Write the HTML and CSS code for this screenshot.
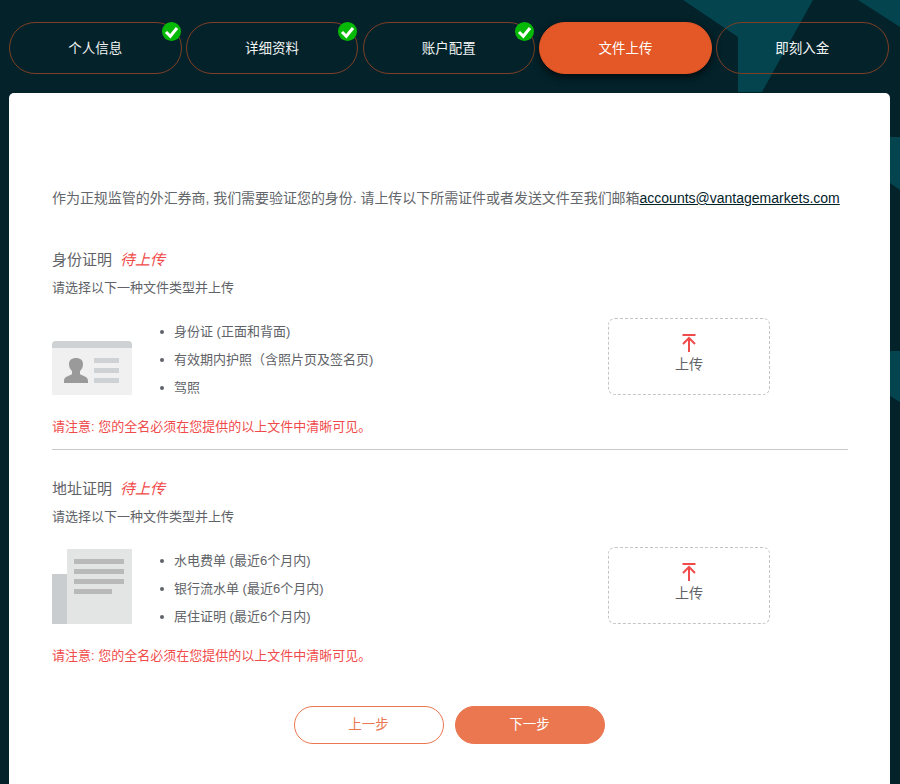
FILE: index.html
```html
<!DOCTYPE html>
<html lang="zh-CN">
<head>
<meta charset="utf-8">
<title>文件上传</title>
<link rel="stylesheet" href="styles.css">
</head>
<body>
<svg class="bg-shapes" width="900" height="784" viewBox="0 0 900 784" aria-hidden="true">
  <polygon class="shape" points="683,0 813,0 762,92 738,92 738,37"/>
  <polygon class="shape" points="858,0 900,0 900,27"/>
  <polygon class="shape" points="890,137 900,137 900,190 890,183"/>
  <polygon class="shape" points="890,351 900,351 900,402 890,396"/>
</svg>
<nav class="steps">
  <div class="step"><span class="step-label">个人信息</span><svg class="check" width="19" height="19" viewBox="0 0 19 19"><circle cx="9.5" cy="9.5" r="9.500" fill="#06b906"/><path d="M4 10l4.300 4.300L15 6" fill="none" stroke="#fff" stroke-width="3"/></svg></div>
  <div class="step"><span class="step-label">详细资料</span><svg class="check" width="19" height="19" viewBox="0 0 19 19"><circle cx="9.5" cy="9.5" r="9.500" fill="#06b906"/><path d="M4 10l4.300 4.300L15 6" fill="none" stroke="#fff" stroke-width="3"/></svg></div>
  <div class="step"><span class="step-label">账户配置</span><svg class="check" width="19" height="19" viewBox="0 0 19 19"><circle cx="9.5" cy="9.5" r="9.500" fill="#06b906"/><path d="M4 10l4.300 4.300L15 6" fill="none" stroke="#fff" stroke-width="3"/></svg></div>
  <div class="step active"><span class="step-label">文件上传</span></div>
  <div class="step"><span class="step-label">即刻入金</span></div>
</nav>
<main class="card">
  <p class="intro">作为正规监管的外汇券商, 我们需要验证您的身份. 请上传以下所需证件或者发送文件至我们邮箱<a href="#">accounts@vantagemarkets.com</a></p>

  <section class="doc first">
    <h2 class="doc-title">身份证明<em>待上传</em></h2>
    <p class="doc-sub">请选择以下一种文件类型并上传</p>
    <div class="doc-row">
      <svg class="doc-img" width="80" height="54" viewBox="0 0 80 54">
        <path d="M0 4a4 4 0 0 1 4-4h72a4 4 0 0 1 4 4v50H0z" fill="#f0f0f0"/>
        <path d="M0 4a4 4 0 0 1 4-4h72a4 4 0 0 1 4 4v3H0z" fill="#ced2d4"/>
        <path d="M12 42v-2c0-5 6-5 8-7v-3c-2-2-3-4-3-7 0-4 3-6 7-6s7 2 7 6c0 3-1 5-3 7v3c2 2 8 2 8 7v2z" fill="#9a9a9a"/>
        <rect x="42" y="17" width="25" height="5" fill="#ced2d4"/>
        <rect x="42" y="27" width="25" height="5" fill="#ced2d4"/>
        <rect x="42" y="37" width="25" height="5" fill="#ced2d4"/>
      </svg>
      <ul class="doc-list">
        <li>身份证 (正面和背面)</li>
        <li>有效期内护照（含照片页及签名页)</li>
        <li>驾照</li>
      </ul>
      <div class="upload">
        <svg width="14" height="18" viewBox="0 0 14 18"><path d="M0.500 1h13M7 18V4M1 10L7 4l6 6" fill="none" stroke="#f04b4b" stroke-width="2"/></svg>
        <span class="upload-label">上传</span>
      </div>
    </div>
    <p class="note">请注意: 您的全名必须在您提供的以上文件中清晰可见。</p>
  </section>

  <section class="doc second">
    <h2 class="doc-title">地址证明<em>待上传</em></h2>
    <p class="doc-sub">请选择以下一种文件类型并上传</p>
    <div class="doc-row">
      <svg class="doc-img" width="80" height="75" viewBox="0 0 80 75">
        <rect x="0" y="25" width="16" height="50" fill="#c9cdd0"/>
        <rect x="15" y="0" width="65" height="75" fill="#e3e5e5"/>
        <rect x="22" y="10" width="50" height="5" fill="#b9b9b9"/>
        <rect x="22" y="20" width="50" height="5" fill="#b9b9b9"/>
        <rect x="22" y="30" width="50" height="5" fill="#b9b9b9"/>
        <rect x="22" y="40" width="38" height="5" fill="#b9b9b9"/>
      </svg>
      <ul class="doc-list">
        <li>水电费单 (最近6个月内)</li>
        <li>银行流水单 (最近6个月内)</li>
        <li>居住证明 (最近6个月内)</li>
      </ul>
      <div class="upload">
        <svg width="14" height="18" viewBox="0 0 14 18"><path d="M0.500 1h13M7 18V4M1 10L7 4l6 6" fill="none" stroke="#f04b4b" stroke-width="2"/></svg>
        <span class="upload-label">上传</span>
      </div>
    </div>
    <p class="note">请注意: 您的全名必须在您提供的以上文件中清晰可见。</p>
  </section>

  <div class="actions">
    <button class="btn btn-prev" type="button"><span class="btn-label">上一步</span></button>
    <button class="btn btn-next" type="button"><span class="btn-label">下一步</span></button>
  </div>
</main>
</body>
</html>
```
FILE: styles.css
```css
* { box-sizing: border-box; }
html, body { margin: 0; height: 784px; overflow: hidden; }
body {
  position: relative;
  background: #03222a;
  font-family: "Liberation Sans", "Noto Sans CJK SC", sans-serif;
  font-size: 14px;
  color: #5f6368;
  padding: 22px 10px 0 9px;
}
.bg-shapes { position: absolute; left: 0; top: 0; }
.shape { fill: #03444f; }
.steps {
  position: relative;
  display: flex;
  justify-content: space-between;
  height: 52px;
  padding-right: 1.5px;
}
.step {
  position: relative;
  width: 172.5px;
  height: 52px;
  display: flex;
  align-items: center;
  justify-content: center;
  padding-bottom: 3px;
  border: 1px solid #7e3f26;
  border-radius: 26px;
  color: #f2f4f4;
  font-size: 13.5px;
}
.step.active {
  background: #e45726;
  border-color: #e45726;
  color: #fff;
  box-shadow: 0 3px 8px rgba(0,0,0,.7);
}
.check { position: absolute; right: 0; top: -1px; }
.card {
  position: relative;
  margin-top: 19px;
  height: 691px;
  background: #fff;
  border-radius: 5px 5px 0 0;
  padding: 96px 42px 0 43px;
}
.intro { margin: 0; font-size: 14px; line-height: 18px; color: #63666a; white-space: nowrap; letter-spacing: -0.045px; }
.intro a { color: #03222a; letter-spacing: 0; }
.doc-title { margin: 0; font-size: 15px; line-height: 20px; font-weight: 400; color: #5f6368; }
.doc-title em { margin-left: 8px; color: #f04b4b; }
.doc-sub { margin: 9px 0 0; font-size: 13px; line-height: 18px; }
.first { margin-top: 43px; padding-bottom: 13px; border-bottom: 1px solid #c9c9c9; }
.second { margin-top: 29px; }
.doc-row { display: flex; margin-top: 21px; height: 84px; align-items: flex-start; }
.doc-img { flex: none; align-self: flex-end; margin-bottom: 7px; }
.doc-list { flex: none; width: 476px; margin: 0; padding: 0 0 0 41px; list-style: none; font-size: 13px; }
.doc-list li { position: relative; height: 28px; line-height: 28px; padding-left: 1px; }
.doc-list li::before { content: ""; position: absolute; left: -13px; top: 12px; width: 4px; height: 4px; border-radius: 50%; background: #5f6368; }
.upload {
  flex: none;
  width: 162px;
  height: 77px;
  display: flex;
  flex-direction: column;
  align-items: center;
  padding-top: 15px;
  gap: 2px;
  border: 1px dashed #c4c4c4;
  border-radius: 7px;
  color: #5f6368;
}
.upload-label { line-height: 20px; }
.note { margin: 16px 0 0; font-size: 13px; line-height: 18px; color: #f04b4b; }
.actions { display: flex; justify-content: center; gap: 11px; margin-top: 41px; padding-right: 2px; }
.btn { width: 150px; height: 38px; border-radius: 19px; font: inherit; font-size: 13.5px; padding: 0 0 4px; }
.btn-prev { background: #fff; border: 1px solid #ea7750; color: #ea7750; }
.btn-next { background: #ea7750; border: 1px solid #ea7750; color: #fff; }
```
